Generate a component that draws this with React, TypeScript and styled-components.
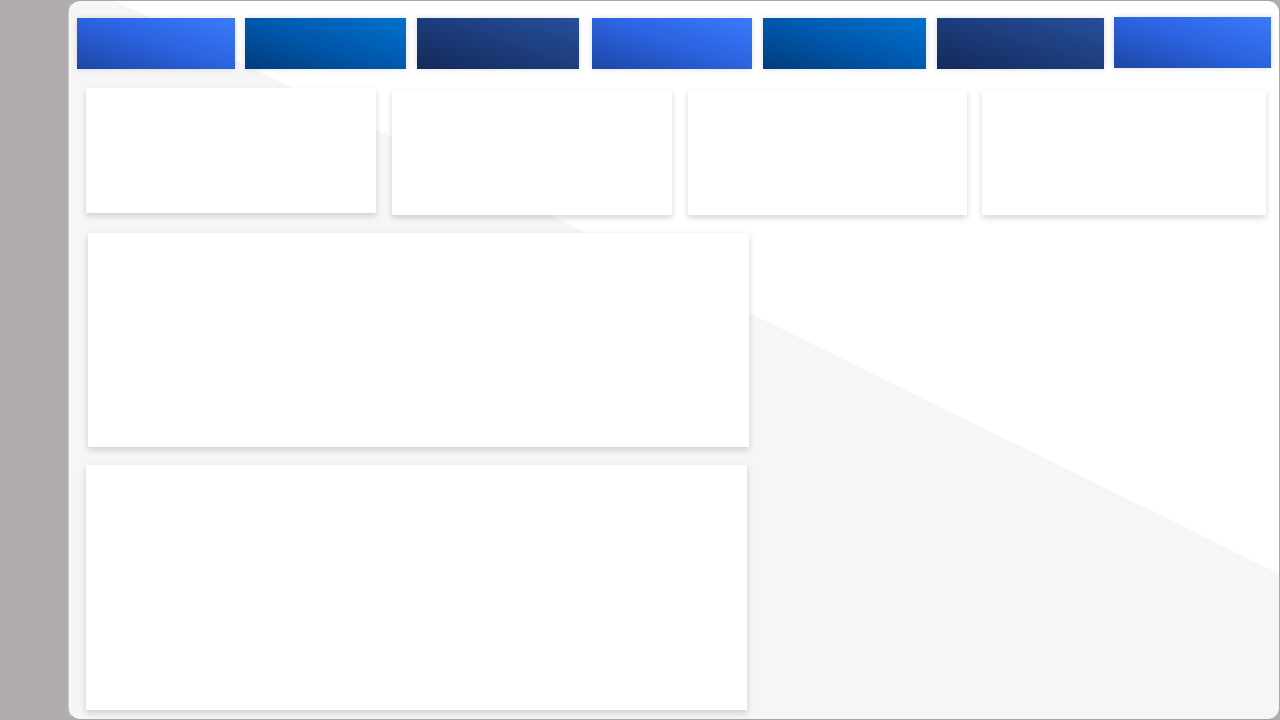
import React from 'react';
import styled, { createGlobalStyle } from 'styled-components';

const GlobalStyle = createGlobalStyle`
  html, body {
    margin: 0;
    padding: 0;
    background: #b1adac;
    font-family: 'Liberation Sans', Arial, sans-serif;
  }
  * { box-sizing: border-box; }
`;

const Shell = styled.div`
  display: flex;
  width: 1280px;
  height: 720px;
  overflow: hidden;
`;

const Sidebar = styled.aside`
  width: 68px;
  flex: none;
  background: #b1adac;
`;

const Panel = styled.main`
  flex: 1;
  height: 720px;
  border: 1px solid #a7a7a7;
  border-left-color: #c9c9c9;
  border-radius: 12px;
  background: linear-gradient(26.2deg, #f6f6f6 56.4%, #ffffff 56.4%);
  display: flex;
  flex-direction: column;
`;

const TileRow = styled.div`
  display: flex;
  margin: 17px 8px 0 8px;
  height: 51px;
  align-items: flex-start;
`;

const tones = {
  blue: 'linear-gradient(to top right, #1d46a6 0%, #2b62df 50%, #3a7bfb 100%)',
  ocean: 'linear-gradient(to top right, #003d7c 0%, #0058ad 50%, #0072ce 100%)',
  navy: 'linear-gradient(to top right, #132a5a 0%, #1d3c7c 50%, #26509a 100%)',
};

type Tone = keyof typeof tones;

const Tile = styled.div<{ $tone: Tone; $w: number; $gap: number; $lift?: boolean }>`
  width: ${p => p.$w}px;
  height: 51px;
  flex: none;
  margin-left: ${p => p.$gap}px;
  margin-top: ${p => (p.$lift ? '-1px' : '0')};
  background: ${p => tones[p.$tone]};
  box-shadow: 0 0 6px rgba(0, 0, 0, 0.14);
`;

const StatRow = styled.div`
  display: flex;
  margin: 19px 13px 0 17px;
  align-items: flex-start;
`;

const StatCard = styled.div<{ $w: number; $gap: number; $offset?: number }>`
  width: ${p => p.$w}px;
  height: 125px;
  flex: none;
  margin-left: ${p => p.$gap}px;
  margin-top: ${p => p.$offset ?? 0}px;
  background: #ffffff;
  box-shadow: 0 3px 6px rgba(0, 0, 0, 0.16);
`;

const ChartColumn = styled.div`
  display: flex;
  flex-direction: column;
  gap: 18px;
  margin: 18px 0 0 17px;
  width: 663px;
`;

const ChartCard = styled.div<{ $h: number; $shift?: number }>`
  width: 661px;
  height: ${p => p.$h}px;
  margin-left: ${p => p.$shift ?? 0}px;
  background: #ffffff;
  box-shadow: 0 3px 7px rgba(0, 0, 0, 0.17);
`;

const tiles: { tone: Tone; w: number; gap: number; lift?: boolean }[] = [
  { tone: 'blue', w: 158, gap: 0 },
  { tone: 'ocean', w: 161, gap: 10 },
  { tone: 'navy', w: 162, gap: 11 },
  { tone: 'blue', w: 160, gap: 13 },
  { tone: 'ocean', w: 163, gap: 11 },
  { tone: 'navy', w: 167, gap: 11 },
  { tone: 'blue', w: 157, gap: 10, lift: true },
];

const stats = [
  { w: 290, gap: 0, offset: 0 },
  { w: 280, gap: 16, offset: 2 },
  { w: 279, gap: 16, offset: 2 },
  { w: 284, gap: 15, offset: 2 },
];

export default function App() {
  return (
    <>
      <GlobalStyle />
      <Shell>
        <Sidebar />
        <Panel>
          <TileRow>
            {tiles.map((t, i) => (
              <Tile key={i} $tone={t.tone} $w={t.w} $gap={t.gap} $lift={t.lift} />
            ))}
          </TileRow>
          <StatRow>
            {stats.map((s, i) => (
              <StatCard key={i} $w={s.w} $gap={s.gap} $offset={s.offset} />
            ))}
          </StatRow>
          <ChartColumn>
            <ChartCard $h={214} $shift={2} />
            <ChartCard $h={245} />
          </ChartColumn>
        </Panel>
      </Shell>
    </>
  );
}
